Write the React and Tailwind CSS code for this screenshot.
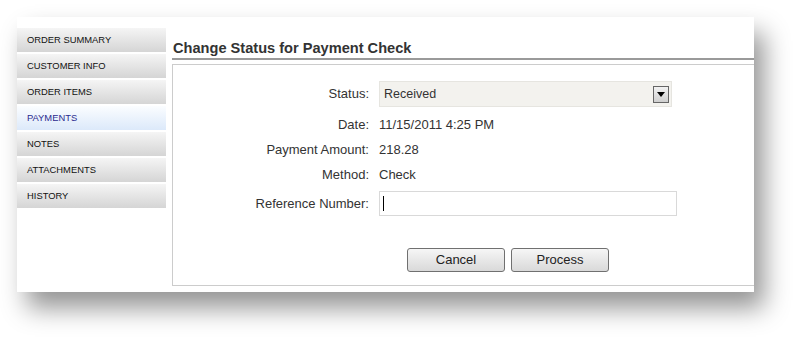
import React from "react";

const items = [
  "ORDER SUMMARY",
  "CUSTOMER INFO",
  "ORDER ITEMS",
  "PAYMENTS",
  "NOTES",
  "ATTACHMENTS",
  "HISTORY",
];

export default function App() {
  return (
    <div className="w-[802px] h-[340px] bg-white pt-[17px] pl-[17px] font-['Liberation_Sans',Arial,sans-serif]">
      <div className="w-[737px] h-[275px] bg-white flex overflow-hidden shadow-[10px_16px_24px_rgba(0,0,0,0.42)]">
        <div className="w-[149px] pt-[11px] flex flex-col gap-[2px]">
          {items.map((t) => {
            const active = t === "PAYMENTS";
            return (
              <div
                key={t}
                className={
                  active
                    ? "h-[24px] flex items-center pl-[10px] text-[9.4px] text-[#2b2b8f] bg-gradient-to-b from-[#fbfdff] to-[#dce9fa]"
                    : "h-[24px] flex items-center pl-[10px] text-[9.4px] text-[#111] bg-gradient-to-b from-[#f5f5f5] to-[#d5d5d5]"
                }
              >
                {t}
              </div>
            );
          })}
        </div>
        <div className="flex-1 ml-[6px] flex flex-col">
          <div className="h-[43px] flex items-end pb-0 pl-[1px] border-b-2 border-[#9a9a9a] text-[14.6px] font-bold text-[#333]">
            <span className="leading-[18px] mb-[1px]">Change Status for Payment Check</span>
          </div>
          <div className="mt-[4px] h-[222px] border border-r-0 border-[#cccccc] flex flex-col pt-[16px] text-[13px] text-[#333]">
            <div className="flex items-center h-[26px]">
              <div className="w-[196px] text-right">Status:</div>
              <div className="ml-[10px] w-[293px] h-[26px] bg-[#f3f2ee] border border-[#e6e5e0] flex items-center justify-between pl-[4px] pr-[2px]">
                <span className="text-[12.5px]">Received</span>
                <div className="w-[16px] h-[17px] border border-[#666] bg-gradient-to-b from-[#f2f2f2] to-[#cfcfcf] flex items-center justify-center">
                  <svg width="8" height="5" viewBox="0 0 8 5">
                    <path d="M0 0H8L4 5Z" fill="#000" />
                  </svg>
                </div>
              </div>
            </div>
            <div className="flex items-center h-[25px] mt-[5px]">
              <div className="w-[196px] text-right">Date:</div>
              <div className="ml-[10px]">11/15/2011 4:25 PM</div>
            </div>
            <div className="flex items-center h-[25px]">
              <div className="w-[196px] text-right">Payment Amount:</div>
              <div className="ml-[10px]">218.28</div>
            </div>
            <div className="flex items-center h-[25px]">
              <div className="w-[196px] text-right">Method:</div>
              <div className="ml-[10px]">Check</div>
            </div>
            <div className="flex items-center h-[25px] mt-[4px]">
              <div className="w-[196px] text-right">Reference Number:</div>
              <div className="ml-[10px] w-[298px] h-[25px] border border-[#d9d9d9] flex items-center pl-[3px]">
                <div className="w-[1px] h-[15px] bg-black" />
              </div>
            </div>
            <div className="flex mt-[32px] ml-[234px] gap-[6px]">
              <button className="w-[98px] h-[24px] rounded-[3px] border border-[#707070] bg-gradient-to-b from-[#f6f6f6] to-[#d9d9d9] text-[13px] text-[#222]">
                Cancel
              </button>
              <button className="w-[98px] h-[24px] rounded-[3px] border border-[#707070] bg-gradient-to-b from-[#f6f6f6] to-[#d9d9d9] text-[13px] text-[#222]">
                Process
              </button>
            </div>
          </div>
        </div>
      </div>
    </div>
  );
}
